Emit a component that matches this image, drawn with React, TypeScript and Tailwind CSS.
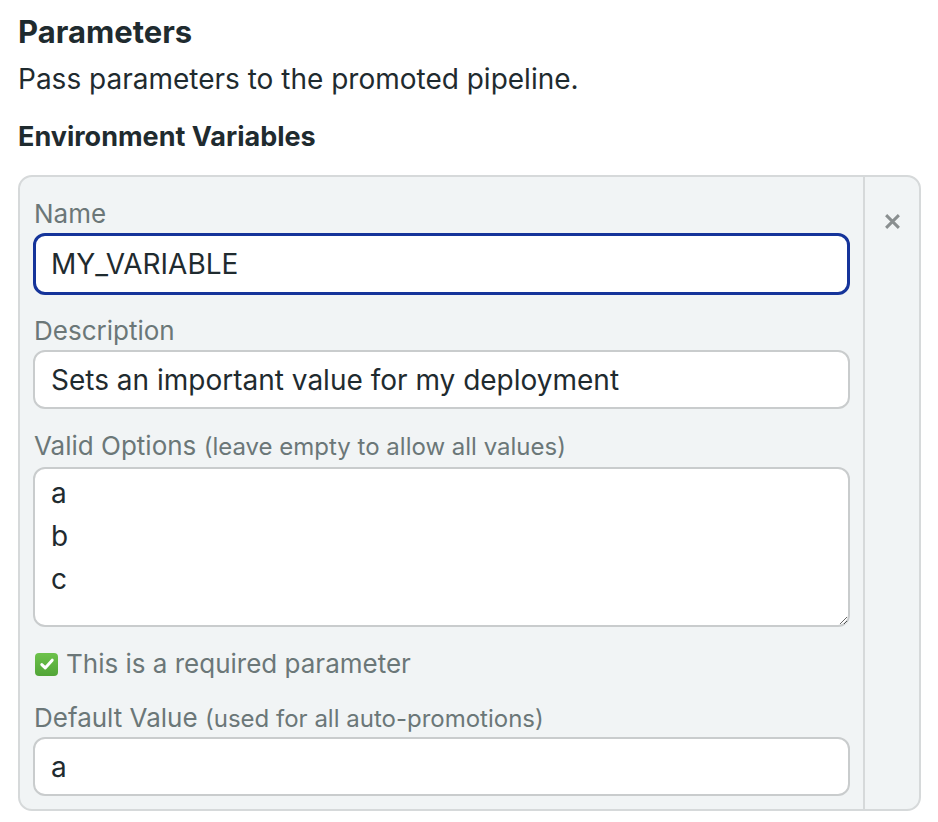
import React from 'react';

const labelCls = "ml-[1px] text-[26px] leading-[30px] text-[#6b7778]";
const inputCls =
  "w-full h-[59px] rounded-[12px] border-2 border-[#c9cccd] bg-white px-[16px] text-[28px] text-[#1f2b2f] outline-none";

export default function App() {
  return (
    <div className="min-h-screen bg-white px-[18px] pt-[14px] font-['Inter','Liberation_Sans',sans-serif] text-[#1f2b2f]">
      <h2 className="text-[31px] leading-[36px] font-bold">Parameters</h2>
      <p className="mt-[12px] text-[28px] leading-[34px]">Pass parameters to the promoted pipeline.</p>
      <h3 className="mt-[25px] text-[27px] leading-[32px] font-bold">Environment Variables</h3>

      <div className="mt-[22px] w-[903px] flex rounded-[14px] border-2 border-[#d6d9da] bg-[#f1f4f5]">
        <div className="flex-1 pl-[13px] pr-[13px] pt-[22px] pb-[13px] flex flex-col">
          <label className={labelCls}>Name</label>
          <input
            defaultValue="MY_VARIABLE"
            className="mt-[4px] w-full h-[62px] rounded-[12px] border-[3px] border-[#15349a] bg-white px-[15px] text-[28px] text-[#1f2b2f] outline-none"
          />

          <label className={`${labelCls} mt-[21px]`}>Description</label>
          <input defaultValue="Sets an important value for my deployment" className={`${inputCls} mt-[4px]`} />

          <label className={`${labelCls} mt-[22px]`}>
            Valid Options <span className="text-[24px]">(leave empty to allow all values)</span>
          </label>
          <textarea
            defaultValue={"a\nb\nc"}
            className="mt-[5px] w-full h-[160px] rounded-[12px] border-2 border-[#c9cccd] bg-white px-[16px] pt-[3px] text-[28px] leading-[43px] text-[#1f2b2f] outline-none"
          />

          <div className="mt-[22px] ml-[2px] flex items-center gap-[8px]">
            <span className="w-[23px] h-[23px] rounded-[4px] bg-gradient-to-b from-[#6dc24b] to-[#52a537] flex items-center justify-center">
              <svg width="16" height="16" viewBox="0 0 16 16" fill="none">
                <path d="M2.8 8.6l3.4 3.3L13.2 4.2" stroke="white" strokeWidth="3" strokeLinecap="round" strokeLinejoin="round" />
              </svg>
            </span>
            <span className="text-[26px] leading-[30px] text-[#6b7778]">This is a required parameter</span>
          </div>

          <label className={`${labelCls} mt-[24px]`}>
            Default Value <span className="text-[24px]">(used for all auto-promotions)</span>
          </label>
          <input defaultValue="a" className={`${inputCls} mt-[3px]`} />
        </div>

        <div className="w-[56px] border-l-2 border-[#d6d9da] flex justify-center pt-[36px]">
          <svg width="17" height="17" viewBox="0 0 16 16">
            <path d="M2 2l12 12M14 2L2 14" stroke="#8a8f90" strokeWidth="2.8" />
          </svg>
        </div>
      </div>
    </div>
  );
}
